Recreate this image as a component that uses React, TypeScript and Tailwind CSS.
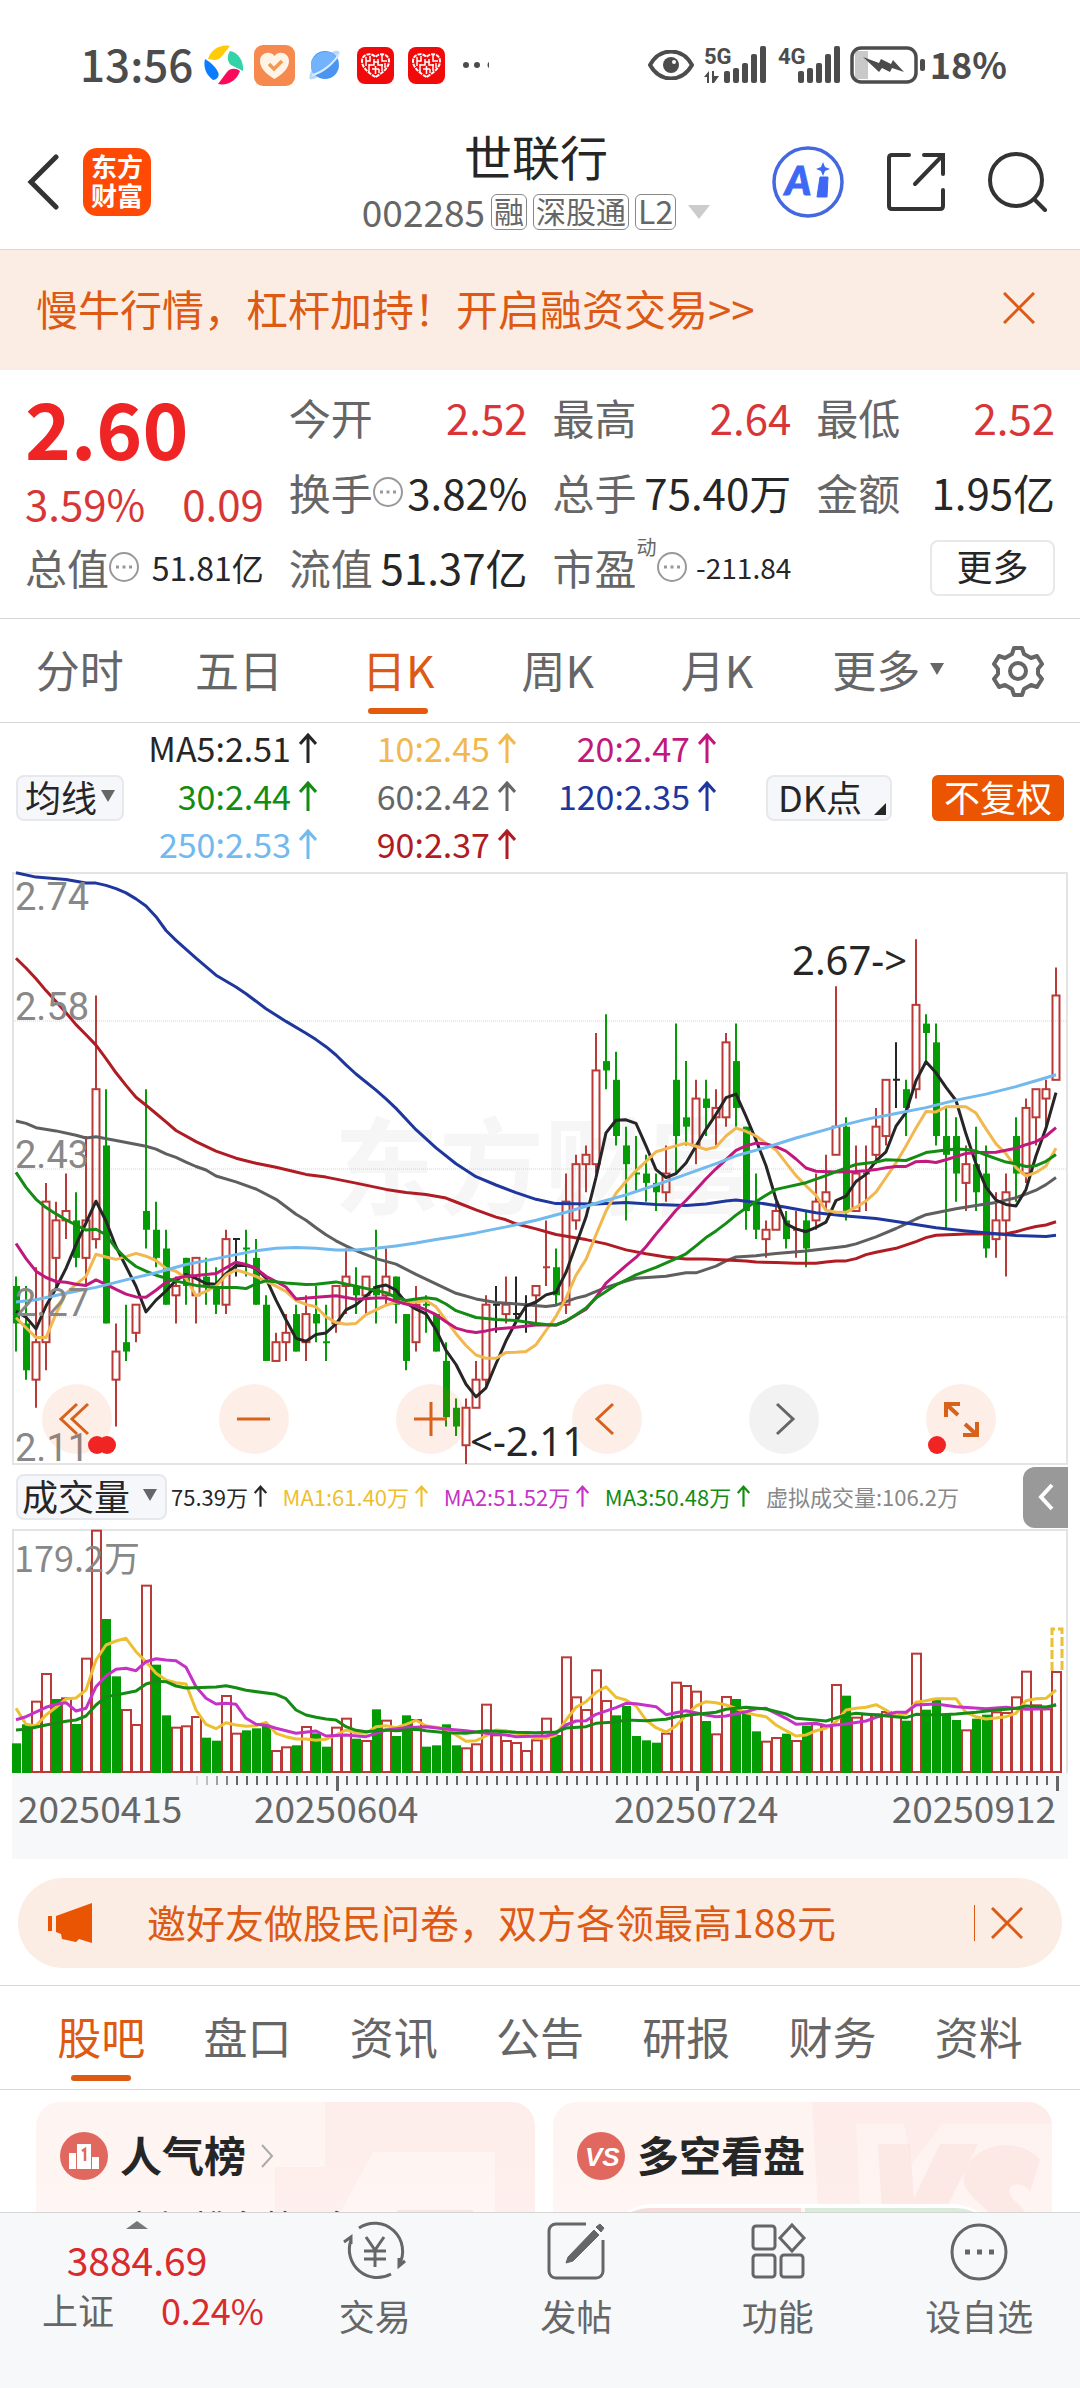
import { ReactNode } from 'react'

type Candle = [high: number, top: number, bottom: number, low: number, kind: 'u' | 'd' | 'f']

// prices are in cents above 2.11
const candles: Candle[] = [
  [20, 19, 15, 12, 'd'], [19, 15, 10, 9, 'd'], [21, 13, 9, 6, 'u'], [30, 28, 13, 10, 'u'], [28, 26, 22, 19, 'u'],
  [31, 27, 26, 24, 'u'], [29, 26, 22, 21, 'd'], [35, 26, 22, 19, 'u'], [50, 40, 24, 23, 'u'], [40, 34, 15, 15, 'd'],
  [15, 12, 9, 4, 'u'], [17, 13, 12, 11, 'd'], [17, 17, 14, 13, 'u'], [40, 27, 25, 23, 'd'], [28, 25, 22, 21, 'd'],
  [25, 23, 17, 17, 'd'], [20, 19, 18, 15, 'u'], [22, 22, 19, 17, 'd'], [22, 22, 18, 15, 'u'], [22, 20, 19, 17, 'd'],
  [21, 19, 17, 16, 'd'], [25, 24, 17, 16, 'u'], [24, 24, 24, 20, 'f'], [25, 23, 23, 20, 'd'], [24, 22, 17, 17, 'd'],
  [18, 17, 11, 11, 'd'], [14, 13, 11, 11, 'u'], [16, 14, 13, 11, 'u'], [17, 16, 12, 12, 'd'], [18, 16, 13, 11, 'u'],
  [19, 16, 15, 13, 'd'], [17, 13, 13, 11, 'd'], [19, 19, 15, 14, 'u'], [23, 20, 19, 16, 'u'], [21, 19, 18, 16, 'd'],
  [20, 20, 18, 16, 'u'], [25, 19, 18, 15, 'd'], [23, 20, 18, 17, 'u'], [20, 20, 17, 15, 'd'], [16, 16, 11, 10, 'd'],
  [19, 17, 13, 12, 'u'], [18, 17, 17, 14, 'd'], [16, 16, 12, 12, 'd'], [13, 11, 5, 4, 'd'], [7, 6, 4, 3, 'd'],
  [7, 6, 2, 0, 'u'], [11, 9, 6, 6, 'u'], [18, 17, 9, 8, 'u'], [19, 17, 17, 14, 'f'], [20, 17, 16, 15, 'u'],
  [20, 16, 16, 15, 'f'], [18, 17, 17, 14, 'f'], [19, 19, 18, 15, 'u'], [26, 21, 21, 19, 'u'], [23, 21, 18, 17, 'd'],
  [31, 28, 17, 16, 'u'], [33, 32, 26, 25, 'u'], [34, 33, 32, 29, 'u'], [46, 42, 32, 31, 'u'], [48, 43, 42, 40, 'd'],
  [44, 41, 35, 34, 'd'], [36, 34, 32, 26, 'd'], [35, 31, 31, 29, 'd'], [33, 31, 30, 28, 'd'], [31, 30, 29, 27, 'd'],
  [34, 31, 29, 28, 'u'], [47, 41, 35, 31, 'd'], [43, 37, 36, 34, 'd'], [41, 39, 34, 32, 'u'], [41, 39, 38, 35, 'd'],
  [40, 38, 37, 34, 'u'], [46, 45, 37, 36, 'u'], [47, 43, 38, 36, 'd'], [36, 36, 27, 25, 'd'], [31, 28, 25, 24, 'd'],
  [26, 25, 24, 22, 'u'], [28, 27, 25, 25, 'u'], [27, 26, 24, 23, 'd'], [27, 25, 25, 22, 'u'], [27, 26, 23, 21, 'd'],
  [31, 28, 26, 25, 'u'], [33, 29, 28, 27, 'u'], [51, 36, 33, 33, 'u'], [37, 36, 27, 26, 'd'], [34, 31, 27, 27, 'u'],
  [34, 31, 31, 27, 'u'], [38, 36, 33, 32, 'u'], [41, 41, 35, 34, 'u'], [45, 41, 41, 38, 'f'], [41, 40, 38, 35, 'd'],
  [56, 49, 40, 39, 'u'], [48, 47, 46, 43, 'd'], [47, 45, 35, 34, 'd'], [38, 35, 33, 25, 'd'], [37, 35, 31, 28, 'd'],
  [34, 32, 30, 27, 'u'], [36, 32, 29, 27, 'd'], [34, 31, 23, 22, 'd'], [29, 26, 24, 22, 'u'], [31, 29, 26, 20, 'u'],
  [37, 35, 31, 28, 'd'], [39, 38, 31, 30, 'u'], [40, 40, 37, 34, 'u'], [41, 40, 39, 36, 'u'], [53, 50, 41, 41, 'u'],
]

// flat lists of bar index, raw y
const averages = [
  {
    color: '#5f5f5f',
    points: [0, 662, 1, 668, 2, 679, 4, 687, 6, 698, 7, 705, 8, 702, 10, 711, 13, 726, 14, 733, 15, 745, 16, 754, 17, 766, 18, 777, 19, 786, 20, 801, 22, 816, 24, 834, 26, 860, 28, 898, 29, 913, 30, 932, 31, 950, 32, 965, 33, 978, 34, 990, 36, 1010, 38, 1024, 40, 1050, 42, 1074, 44, 1098, 46, 1112, 48, 1121, 51, 1127, 53, 1131, 54, 1128, 56, 1110, 57, 1104, 59, 1083, 61, 1067, 62, 1060, 65, 1055, 67, 1046, 68, 1046, 70, 1029, 71, 1016, 72, 1006, 74, 1003, 76, 997, 79, 991, 82, 982, 83, 979, 84, 973, 86, 955, 88, 934, 89, 922, 90, 910, 91, 899, 92, 894, 94, 884, 96, 876, 98, 868, 99, 862, 100, 856, 101, 847, 102, 837, 103, 823, 104, 805],
  },
  {
    color: '#b01c24',
    points: [0, 250, 1, 275, 2, 302, 3, 332, 4, 360, 5, 388, 6, 418, 7, 444, 8, 470, 9, 504, 10, 540, 11, 572, 12, 602, 13, 622, 14, 643, 15, 664, 16, 686, 18, 714, 20, 738, 22, 756, 24, 769, 26, 779, 28, 791, 29, 797, 31, 804, 34, 819, 37, 835, 39, 843, 41, 848, 43, 857, 44, 867, 46, 887, 48, 905, 49, 912, 50, 922, 52, 935, 54, 949, 57, 962, 59, 973, 61, 988, 63, 998, 65, 1006, 67, 1011, 69, 1011, 71, 1014, 73, 1016, 74, 1019, 76, 1020, 78, 1022, 80, 1022, 81, 1019, 82, 1016, 83, 1016, 84, 1010, 85, 1000, 86, 994, 88, 984, 90, 967, 91, 957, 92, 951, 95, 948, 99, 947, 100, 942, 101, 935, 102, 929, 103, 925, 104, 917],
  },
  {
    color: '#1f379d',
    points: [0, 34, 2, 45, 5, 51, 7, 60, 8, 60, 9, 66, 10, 74, 11, 85, 12, 100, 13, 118, 14, 145, 15, 180, 16, 205, 18, 250, 20, 293, 22, 323, 23, 340, 25, 378, 27, 410, 29, 440, 30, 456, 31, 474, 32, 495, 33, 520, 34, 543, 36, 584, 37, 606, 38, 630, 40, 684, 42, 730, 44, 770, 46, 803, 48, 824, 50, 843, 52, 860, 54, 871, 58, 872, 61, 868, 64, 873, 67, 876, 69, 872, 71, 864, 72, 862, 74, 868, 77, 880, 80, 894, 83, 902, 86, 909, 89, 920, 92, 932, 95, 940, 98, 947, 100, 952, 103, 954, 104, 951],
  },
  {
    color: '#262626',
    points: [0, 1143, 1, 1158, 2, 1188, 3, 1130, 4, 1085, 5, 1035, 6, 975, 7, 920, 8, 865, 9, 915, 10, 980, 11, 1030, 12, 1080, 13, 1145, 14, 1115, 15, 1092, 16, 1065, 17, 1050, 18, 1060, 19, 1073, 20, 1075, 21, 1048, 22, 1028, 23, 1027, 24, 1035, 25, 1060, 26, 1115, 27, 1165, 28, 1212, 29, 1219, 30, 1202, 31, 1198, 32, 1175, 33, 1140, 34, 1127, 35, 1105, 36, 1082, 37, 1077, 38, 1090, 39, 1122, 40, 1138, 41, 1150, 42, 1190, 43, 1242, 44, 1278, 45, 1328, 46, 1360, 47, 1337, 48, 1276, 49, 1218, 50, 1170, 51, 1130, 52, 1120, 53, 1102, 54, 1095, 55, 1045, 56, 975, 57, 905, 58, 805, 59, 692, 60, 660, 61, 659, 62, 668, 63, 725, 64, 785, 65, 805, 66, 795, 67, 768, 68, 725, 69, 683, 70, 645, 71, 603, 72, 594, 73, 650, 74, 710, 75, 775, 76, 860, 77, 922, 78, 935, 79, 942, 80, 931, 81, 918, 82, 863, 83, 852, 84, 815, 85, 797, 86, 763, 87, 740, 88, 675, 89, 640, 90, 560, 91, 512, 92, 540, 93, 577, 94, 610, 95, 695, 96, 770, 97, 830, 98, 862, 99, 873, 100, 877, 101, 835, 102, 750, 103, 680, 104, 590],
  },
  {
    color: '#f1b84f',
    points: [0, 1160, 1, 1185, 2, 1210, 3, 1210, 4, 1150, 5, 1098, 6, 1075, 7, 1055, 8, 999, 9, 1006, 10, 1012, 11, 1005, 12, 997, 13, 1004, 14, 1015, 15, 1035, 16, 1042, 17, 1060, 18, 1104, 19, 1093, 20, 1080, 21, 1052, 22, 1039, 23, 1046, 24, 1055, 25, 1067, 26, 1080, 27, 1093, 28, 1116, 29, 1126, 30, 1132, 31, 1157, 32, 1172, 33, 1176, 34, 1174, 35, 1152, 36, 1140, 37, 1128, 38, 1120, 40, 1120, 41, 1116, 42, 1132, 43, 1166, 44, 1200, 45, 1230, 46, 1254, 47, 1262, 48, 1262, 49, 1248, 50, 1247, 51, 1245, 52, 1228, 53, 1192, 54, 1156, 55, 1110, 56, 1052, 57, 1012, 58, 950, 59, 890, 60, 845, 61, 815, 62, 788, 63, 764, 64, 740, 65, 732, 66, 725, 67, 718, 68, 726, 69, 734, 70, 728, 71, 700, 72, 680, 73, 688, 74, 700, 75, 718, 76, 735, 77, 768, 78, 800, 79, 826, 80, 850, 81, 888, 82, 893, 83, 893, 84, 880, 85, 864, 86, 842, 87, 805, 88, 768, 89, 725, 90, 680, 91, 638, 92, 639, 93, 626, 94, 625, 95, 626, 96, 642, 97, 682, 98, 720, 99, 745, 100, 780, 101, 801, 102, 792, 103, 776, 104, 731],
  },
  {
    color: '#c0187c',
    points: [0, 972, 1, 1010, 2, 1042, 3, 1058, 4, 1068, 5, 1070, 6, 1075, 7, 1078, 8, 1064, 9, 1075, 10, 1088, 11, 1100, 12, 1107, 13, 1108, 14, 1090, 15, 1070, 16, 1060, 17, 1055, 18, 1053, 20, 1048, 21, 1033, 22, 1019, 23, 1025, 24, 1035, 25, 1055, 26, 1068, 27, 1082, 28, 1112, 30, 1108, 32, 1104, 34, 1113, 36, 1110, 37, 1110, 38, 1118, 39, 1125, 40, 1130, 41, 1140, 42, 1152, 43, 1170, 44, 1186, 45, 1193, 46, 1197, 47, 1193, 48, 1188, 50, 1184, 52, 1178, 54, 1178, 55, 1168, 57, 1138, 58, 1108, 59, 1072, 60, 1050, 61, 1028, 62, 1007, 63, 980, 64, 948, 65, 918, 66, 888, 67, 863, 68, 836, 69, 808, 70, 783, 71, 760, 72, 736, 73, 725, 74, 718, 75, 720, 76, 727, 77, 738, 78, 758, 79, 781, 80, 789, 82, 791, 84, 790, 85, 788, 86, 785, 87, 780, 88, 777, 89, 777, 90, 765, 91, 764, 92, 767, 93, 760, 94, 752, 95, 744, 96, 742, 98, 741, 99, 736, 100, 731, 101, 722, 102, 714, 103, 700, 104, 679],
  },
  {
    color: '#148c14',
    points: [0, 792, 1, 830, 2, 860, 3, 881, 4, 897, 5, 912, 6, 925, 7, 938, 8, 936, 9, 950, 10, 984, 11, 1010, 12, 1030, 13, 1042, 14, 1052, 16, 1067, 18, 1078, 20, 1083, 22, 1083, 23, 1086, 24, 1074, 25, 1066, 27, 1072, 29, 1076, 30, 1075, 32, 1069, 34, 1080, 36, 1091, 37, 1096, 38, 1108, 39, 1116, 40, 1112, 41, 1109, 42, 1112, 43, 1125, 44, 1142, 46, 1159, 48, 1164, 50, 1167, 52, 1174, 53, 1177, 54, 1178, 55, 1168, 56, 1152, 57, 1135, 58, 1110, 60, 1077, 62, 1051, 64, 1032, 66, 1010, 67, 998, 68, 978, 69, 957, 70, 940, 71, 921, 72, 900, 73, 882, 74, 866, 75, 850, 76, 835, 79, 818, 81, 800, 82, 790, 84, 772, 86, 766, 87, 760, 89, 762, 90, 752, 91, 742, 93, 735, 94, 733, 95, 734, 96, 738, 97, 748, 98, 757, 99, 766, 100, 770, 101, 777, 102, 775, 103, 764, 104, 747],
  },
  {
    color: '#72b9ee',
    points: [0, 1120, 2, 1114, 5, 1098, 8, 1083, 11, 1064, 14, 1046, 17, 1025, 20, 1010, 22, 1000, 24, 990, 26, 984, 28, 982, 30, 984, 32, 988, 34, 988, 36, 984, 38, 978, 40, 971, 42, 962, 44, 954, 46, 945, 49, 930, 52, 913, 55, 893, 58, 870, 61, 849, 64, 824, 67, 797, 70, 770, 72, 750, 75, 729, 78, 705, 82, 677, 85, 658, 88, 643, 91, 628, 94, 609, 97, 594, 100, 575, 102, 560, 104, 545],
  },
]

// raw bar tops, negative means a falling day
const volumes = [
  -850, -793, 722, 639, -717, 712, -792, 593, 209, -477, -649, 747, 792, 374, -614, -766, 800, 796, 768, -833, -842,
  705, 818, -811, -805, -797, 870, 859, -856, 798, -820, -860, 800, 773, -836, 840, -748, 779, -828, -766, 777, -860,
  -856, -793, -856, 862, 850, 731, 823, 840, 846, 870, 838, 773, -825, 589, 709, 747, 628, 720, -766, -738, -828, -841,
  -848, 818, 665, 675, 692, -783, 820, 708, -717, -758, -814, 842, 831, -821, 840, -797, 790, 797, 672, -707, 770, 760,
  760, 753, 765, -782, 578, -749, -720, -763, -780, 808, -776, -764, 754, 756, 709, 632, 733, 745, 633,
]

const volumeAverages = [
  {
    color: '#ecc030',
    points: [0, 745, 1, 793, 2, 797, 3, 765, 4, 742, 5, 717, 6, 714, 7, 690, 8, 600, 9, 555, 10, 543, 11, 535, 12, 575, 13, 605, 14, 640, 15, 660, 16, 668, 17, 672, 18, 750, 19, 793, 20, 806, 21, 788, 22, 795, 23, 799, 24, 797, 25, 787, 26, 820, 27, 830, 28, 837, 29, 837, 30, 841, 31, 838, 32, 825, 33, 810, 34, 818, 35, 820, 36, 800, 37, 797, 38, 803, 39, 793, 40, 781, 41, 797, 42, 802, 43, 808, 44, 825, 45, 844, 46, 842, 47, 828, 48, 810, 49, 812, 50, 820, 51, 825, 52, 835, 53, 835, 54, 825, 55, 780, 56, 742, 57, 725, 58, 697, 59, 680, 60, 712, 61, 720, 62, 738, 63, 780, 64, 803, 65, 816, 66, 798, 67, 765, 68, 738, 69, 725, 70, 728, 71, 735, 72, 745, 73, 758, 74, 765, 75, 770, 76, 795, 77, 812, 78, 828, 79, 825, 80, 812, 81, 805, 82, 785, 83, 750, 84, 745, 85, 742, 86, 734, 87, 750, 88, 768, 89, 762, 90, 727, 91, 722, 92, 716, 94, 716, 95, 758, 96, 770, 97, 777, 98, 774, 99, 770, 100, 760, 101, 722, 102, 716, 103, 715, 104, 690],
  },
  {
    color: '#c632c6',
    points: [0, 779, 1, 770, 3, 742, 4, 733, 5, 728, 6, 753, 7, 745, 8, 680, 9, 648, 10, 628, 11, 625, 12, 632, 13, 605, 14, 596, 15, 600, 16, 602, 17, 622, 18, 680, 19, 715, 20, 732, 21, 730, 22, 733, 23, 775, 24, 793, 25, 796, 26, 805, 28, 820, 30, 813, 31, 828, 33, 825, 35, 830, 37, 810, 39, 803, 41, 800, 43, 807, 45, 812, 47, 820, 49, 825, 50, 830, 52, 828, 53, 828, 54, 820, 55, 795, 56, 783, 57, 782, 58, 763, 60, 743, 61, 730, 62, 731, 64, 740, 65, 764, 67, 752, 69, 765, 70, 770, 71, 768, 73, 755, 74, 746, 75, 745, 77, 775, 78, 793, 80, 790, 81, 798, 83, 792, 85, 783, 86, 772, 88, 757, 89, 757, 90, 735, 92, 732, 94, 740, 97, 746, 99, 742, 101, 748, 103, 746, 104, 733],
  },
  {
    color: '#148c14',
    points: [0, 810, 1, 808, 3, 795, 5, 784, 6, 780, 7, 768, 8, 735, 9, 710, 10, 705, 12, 693, 13, 672, 14, 664, 15, 665, 16, 678, 17, 684, 20, 681, 21, 677, 22, 683, 23, 691, 26, 703, 27, 716, 28, 750, 29, 765, 30, 772, 31, 777, 32, 780, 33, 800, 34, 811, 35, 815, 37, 810, 38, 812, 40, 808, 41, 812, 43, 818, 45, 820, 47, 812, 50, 817, 52, 818, 54, 816, 55, 804, 57, 800, 58, 790, 60, 786, 61, 780, 63, 782, 65, 778, 66, 770, 68, 763, 70, 757, 71, 748, 73, 742, 75, 747, 77, 762, 78, 775, 80, 780, 81, 783, 83, 765, 84, 760, 86, 765, 89, 773, 90, 763, 92, 765, 94, 762, 96, 757, 98, 750, 99, 748, 100, 745, 101, 738, 103, 741, 104, 735],
  },
]

const barX = (i: number) => 4 + i * 10
const priceY = (cents: number) => 592 - cents * 9.37
const averageY = (raw: number) => (raw - 32) / 2.53
const volumeY = (raw: number) => (raw - 207) / 3

function toPoints(flat: number[], toY: (raw: number) => number) {
  const out: string[] = []
  for (let i = 0; i < flat.length; i += 2) out.push(`${barX(flat[i])},${toY(flat[i + 1]).toFixed(1)}`)
  return out.join(' ')
}

const RED = '#b93a36'
const GREEN = '#049c04'

function CandleBar({ candle, x }: { candle: Candle; x: number }) {
  const [high, top, bottom, low, kind] = candle
  const color = kind === 'u' ? RED : kind === 'd' ? GREEN : '#262626'
  const flat = top === bottom
  return (
    <g stroke={color} strokeWidth="2">
      {flat && <path d={`M${x} ${priceY(high)}V${priceY(low)}M${x - 3} ${priceY(top)}h7`} />}
      {!flat && kind === 'u' && (
        <>
          <path d={`M${x} ${priceY(high)}V${priceY(top)}M${x} ${priceY(bottom)}V${priceY(low)}`} />
          <rect x={x - 3.5} y={priceY(top)} width="7" height={priceY(bottom) - priceY(top)} fill="none" />
        </>
      )}
      {!flat && kind === 'd' && (
        <>
          <path d={`M${x} ${priceY(high)}V${priceY(low)}`} />
          <rect x={x - 3} y={priceY(top)} width="7" height={priceY(bottom) - priceY(top)} fill={color} stroke="none" />
        </>
      )}
    </g>
  )
}

const priceLabels = [
  { text: '2.74', y: 38 },
  { text: '2.58', y: 148 },
  { text: '2.43', y: 296 },
  { text: '2.27', y: 444 },
  { text: '2.11', y: 589 },
]

function PriceChart() {
  return (
    <svg viewBox="0 0 1056 593" className="block h-auto w-full overflow-visible" role="img" aria-label="日K线图">
      <text x="322" y="334" fontSize="105" fontWeight="700" fill="#f6f6f6">
        东方财富
      </text>
      <rect x="1" y="1" width="1054" height="591" fill="none" stroke="#e4e4e4" strokeWidth="2" />
      {[149, 297, 445].map((y) => (
        <path key={y} d={`M1 ${y}H1055`} stroke="#d4d4d4" strokeDasharray="1 1" />
      ))}
      {candles.map((c, i) => (
        <CandleBar key={i} candle={c} x={barX(i)} />
      ))}
      {averages.map((line) => (
        <polyline
          key={line.color}
          points={toPoints(line.points, averageY)}
          fill="none"
          stroke={line.color}
          strokeWidth="3"
          strokeLinejoin="round"
        />
      ))}
      <g fill="#888" fontSize="38" className="font-[Roboto,sans-serif]">
        {priceLabels.map((l) => (
          <text key={l.text} x="3" y={l.y}>
            {l.text}
          </text>
        ))}
      </g>
      <g fill="#262626" fontSize="40" className="font-['Noto_Sans',sans-serif]">
        <text x="780" y="103">{'2.67->'}</text>
        <text x="458" y="584">{'<-2.11'}</text>
      </g>
    </svg>
  )
}

function VolumeChart() {
  return (
    <svg viewBox="0 0 1056 244" className="block h-auto w-full" role="img" aria-label="成交量图">
      <path d="M0 1H1055V244M1 0V244" fill="none" stroke="#e4e4e4" strokeWidth="2" />
      {volumes.map((v, i) => {
        const y = volumeY(Math.abs(v))
        return v < 0 ? (
          <rect key={i} x={barX(i) - 4} y={y} width="9" height={244 - y} fill={GREEN} />
        ) : (
          <rect key={i} x={barX(i) - 4} y={y + 1} width="9" height={242 - y} fill="#fff" stroke={RED} strokeWidth="2" />
        )
      })}
      <path d="M1040 142V100h10v42" fill="none" stroke="#ecc030" strokeWidth="3" strokeDasharray="9 3" />
      <text x="2" y="43" fontSize="36" fill="#888">
        179.2万
      </text>
      {volumeAverages.map((line) => (
        <polyline
          key={line.color}
          points={toPoints(line.points, volumeY)}
          fill="none"
          stroke={line.color}
          strokeWidth="3"
          strokeLinejoin="round"
        />
      ))}
    </svg>
  )
}

function DateAxis() {
  return (
    <svg viewBox="0 0 1056 86" className="block h-auto w-full bg-[#f7f8fa]" fill="#666" fontSize="37">
      {Array.from({ length: 87 }, (_, k) => k + 18).map((i) => {
        const major = i === 32 || i === 68 || i === 104
        return (
          <rect
            key={i}
            x={barX(i)}
            y="3"
            width={major ? 3 : 2}
            height={major ? 15 : 9}
            opacity={Math.min(1, (i - 17) / 5)}
          />
        )
      })}
      <text x="6" y="50">20250415</text>
      <text x="242" y="50">20250604</text>
      <text x="602" y="50">20250724</text>
      <text x="1044" y="50" textAnchor="end">20250912</text>
    </svg>
  )
}

function UpArrow({ className }: { className: string }) {
  return (
    <svg viewBox="0 0 18 30" className={className} fill="none" stroke="currentColor" strokeWidth="3">
      <path d="M9 30V2M1 11l8-9 8 9" />
    </svg>
  )
}

function Caret({ className }: { className: string }) {
  return (
    <svg viewBox="0 0 14 12" preserveAspectRatio="none" className={className} fill="currentColor">
      <path d="M0 0h14l-7 12z" />
    </svg>
  )
}

function Cross({ className }: { className: string }) {
  return (
    <svg viewBox="0 0 32 32" className={className} fill="none" stroke="#dc5a14" strokeWidth="3">
      <path d="M1 1l30 30M31 1L1 31" />
    </svg>
  )
}

function Info() {
  return (
    <svg viewBox="0 0 30 30" className="size-[30px] shrink-0" fill="none" stroke="#999" strokeWidth="2">
      <circle cx="15" cy="15" r="14" />
      <path d="M7 15h3M13.5 15h3M20 15h3" strokeWidth="3" />
    </svg>
  )
}

function Signal({ label, bars, arrows }: { label: string; bars: number[]; arrows?: boolean }) {
  return (
    <svg viewBox="0 0 62 40" className="h-10 w-[62px]" fill="#4c4c4c">
      <text x="0" y="19" fontSize="22" fontWeight="700" className="font-[Roboto,sans-serif]">
        {label}
      </text>
      {arrows && <path d="M0 32l5-6v12H3v-6zM8 26h2v5h5l-5 7H8z" />}
      {bars.map((h, i) => (
        <rect key={i} x={56 - (bars.length - 1 - i) * 9} y={38 - h} width="6" height={h} rx="2" />
      ))}
    </svg>
  )
}

function HeartApp() {
  return (
    <svg viewBox="0 0 37 37" className="size-[37px]">
      <rect width="37" height="37" rx="8" fill="#f20a0a" />
      <path
        d="M18.5 30C10 25 5 20 5 14c0-7 9-9 13.500-4C23 5 32 7 32 14c0 6-5 11-13.500 16z"
        fill="none"
        stroke="#fff"
        strokeWidth="2"
        strokeDasharray="4 1"
      />
      <path
        d="M9 10v9M13 9v5h-4M12 17v8M17 12v6h-5M15 22h7M18.500 19v8M21 12v6h5M17 15h5M25 8v6h5M25 17v7M28 16v5M22 22v4"
        stroke="#fff"
        strokeWidth="1.500"
        fill="none"
      />
    </svg>
  )
}

function StatusBar() {
  return (
    <div className="flex h-[130px] items-center pr-[73px] pl-20 text-[#4c4c4c]">
      <span className="w-[124px] pb-1 text-[44px] font-medium">13:56</span>
      <svg viewBox="0 0 40 40" className="size-10">
        <path d="M4 14C7 4 17-1 26 1l-8 10c-2 3-5 4-8 4z" fill="#fecb0b" />
        <path d="M26 6c8 1 14 10 13 20l-12-6c-4-3-4-10-1-14z" fill="#31d4a6" />
        <path d="M36 26c-3 9-12 15-22 13l9-12c3-4 9-4 13-1z" fill="#fb0a5c" />
        <path d="M1 14c5 3 11 8 13 13 2 4-1 8-5 8C2 30-1 22 1 14z" fill="#0a7cff" />
      </svg>
      <svg viewBox="0 0 41 41" className="ml-2.5 size-[41px]">
        <rect width="41" height="41" rx="9" fill="#f68a4e" />
        <path d="M20.500 34C12 29 6 23 6 16c0-8 10-11 14.500-5C25 5 35 8 35 16c0 7-6 13-14.500 18z" fill="#fff4e6" />
        <path d="M15 19l5 5 8-8" fill="none" stroke="#f19a54" strokeWidth="3.500" />
      </svg>
      <svg viewBox="0 0 32 32" className="ml-[14px] size-8">
        <path d="M23 3c8-3 9 0 6 6S16 25 7 29s-7-1-5-7z" fill="#b9d7fb" />
        <circle cx="16" cy="16" r="14" fill="#4c94f2" />
        <path d="M3 11C9 1 22 0 27 8c-8 9-14 15-22 18C2 22 1 16 3 11z" fill="#72b3fb" />
        <path d="M30 5c-5 9-17 19-27 21" fill="none" stroke="#dcecff" strokeWidth="2" />
      </svg>
      <span className="ml-4 flex gap-[14px]">
        <HeartApp />
        <HeartApp />
      </span>
      <svg viewBox="0 0 26 6" className="ml-[18px] h-1.5 w-[26px]" fill="#4c4c4c">
        <circle cx="3" cy="3" r="3" />
        <circle cx="14" cy="3" r="3" />
        <path d="M26 0v6c-2-1-2-5 0-6z" />
      </svg>
      <svg viewBox="0 0 46 30" className="ml-auto h-[30px] w-[46px]">
        <path d="M2 15C12-3 34-3 44 15 34 33 12 33 2 15z" fill="none" stroke="#4c4c4c" strokeWidth="4" />
        <circle cx="23" cy="15" r="8" fill="#4c4c4c" />
        <circle cx="26" cy="12" r="2" fill="#fff" />
      </svg>
      <span className="ml-2.5 flex gap-3">
        <Signal label="5G" bars={[12, 15, 20, 29, 37]} arrows />
        <Signal label="4G" bars={[12, 15, 20, 29, 37]} />
      </span>
      <svg viewBox="0 0 76 38" className="ml-2.5 h-[38px] w-[76px]">
        <path d="M5 5h13v28H5z" fill="#c9c9c9" />
        <rect x="2" y="2" width="64" height="34" rx="9" fill="none" stroke="#4c4c4c" strokeWidth="3.500" />
        <path d="M13 11l16 6 2-4 10 5 2-4 11 12-12-4-2 4-8-4-3 4z" fill="#4c4c4c" />
        <rect x="70" y="13" width="5" height="12" rx="2" fill="#4c4c4c" />
      </svg>
      <span className="ml-1 pb-1 text-[36px] font-bold">18%</span>
    </div>
  )
}

function Header() {
  return (
    <header className="flex h-[120px] items-center justify-between border-b border-[#d8d8d8] pb-4">
      <div className="flex w-[300px] items-center pl-[27px]">
        <button type="button" aria-label="返回">
          <svg viewBox="0 0 32 56" className="h-14 w-8" fill="none" stroke="#333" strokeWidth="5" strokeLinecap="round">
            <path d="M29 3L4 28l25 25" />
          </svg>
        </button>
        <a
          href="#home"
          className="ml-6 flex size-[68px] flex-col items-center justify-center rounded-[14px] bg-[#ff4a06] pb-1 text-[26px] leading-[29px] font-bold text-white"
        >
          <span>东方</span>
          <span>财富</span>
        </a>
      </div>
      <div className="flex flex-1 flex-col items-center pt-1 whitespace-nowrap">
        <h1 className="text-[48px] leading-[56px] text-[#262626]">世联行</h1>
        <div className="flex h-[58px] items-center gap-1.5 text-[32px] text-[#666]">
          <span className="text-[37px]">002285</span>
          <span className="flex h-9 items-center rounded-md border border-[#888] px-0.5 pb-1 text-[30px]">融</span>
          <span className="flex h-9 items-center rounded-md border border-[#888] px-0.5 pb-1 text-[30px]">深股通</span>
          <span className="flex h-9 items-center rounded-md border border-[#888] px-0.5 pb-1 text-[32px]">L2</span>
          <Caret className="ml-1.5 h-[14px] w-[22px] text-[#ccc]" />
        </div>
      </div>
      <div className="flex w-[308px] items-center justify-between pr-[32px]">
        <button type="button" aria-label="Ai">
          <svg viewBox="0 0 72 72" className="size-[72px]" fill="#3d68f5">
            <circle cx="36" cy="36" r="34" fill="none" stroke="#4468e0" strokeWidth="3.500" />
            <text
              x="13"
              y="49"
              fontSize="40"
              fontWeight="900"
              fontStyle="italic"
              stroke="#3d68f5"
              className="font-[Lato,sans-serif]"
            >
              A
            </text>
            <path d="M48 31h8l-1 20h-10z" strokeLinejoin="round" stroke="#3d68f5" />
            <path d="M51 16l2 5 5 2-5 2-2 5-2-5-5-2 5-2z" />
          </svg>
        </button>
        <button type="button" aria-label="分享">
          <svg viewBox="0 0 60 60" className="size-[60px]" fill="none" stroke="#333" strokeWidth="4" strokeLinecap="round">
            <path d="M23 3H6c-2 0-3 1-3 3v48c0 2 1 3 3 3h48c2 0 3-1 3-3V38M38 3h19v19M56 4L29 32" />
          </svg>
        </button>
        <button type="button" aria-label="搜索">
          <svg viewBox="0 0 60 60" className="size-[60px]" fill="none" stroke="#333" strokeWidth="4" strokeLinecap="round">
            <circle cx="28" cy="28" r="26" />
            <path d="M46 47l11 11" />
          </svg>
        </button>
      </div>
    </header>
  )
}

function Quote({ label, value, tone, small, info, sup }: {
  label: string
  value: string
  tone?: string
  small?: string
  info?: boolean
  sup?: string
}) {
  return (
    <div className="flex h-[75px] items-center pb-1.5 text-[42px] whitespace-nowrap text-[#666]">
      <dt className="flex items-center">
        {label}
        {sup && <sup className="-top-5 text-[20px]">{sup}</sup>}
        {info && <Info />}
      </dt>
      <dd className={`ml-auto ${small ?? 'text-[42px]'} ${tone ?? 'text-[#262626]'}`}>{value}</dd>
    </div>
  )
}

function QuotePanel() {
  return (
    <dl className="grid grid-cols-4 gap-x-[25px] border-b border-[#d8d8d8] px-[25px] pt-3 pb-[11px]">
      <div className="row-span-2 text-[#d83636]">
        <dt className="flex h-24 items-center pb-2 text-[78px] font-bold text-[#ee2524]">2.60</dt>
        <dd className="flex h-[54px] items-center justify-between pb-1 text-[42px]">
          <span>3.59%</span>
          <span>0.09</span>
        </dd>
      </div>
      <Quote label="今开" value="2.52" tone="text-[#d83636]" />
      <Quote label="最高" value="2.64" tone="text-[#d83636]" />
      <Quote label="最低" value="2.52" tone="text-[#d83636]" />
      <Quote label="换手" value="3.82%" info />
      <Quote label="总手" value="75.40万" />
      <Quote label="金额" value="1.95亿" />
      <Quote label="总值" value="51.81亿" small="text-[32px]" info />
      <Quote label="流值" value="51.37亿" />
      <Quote label="市盈" value="-211.84" small="text-[28px]" sup="动" info />
      <div className="flex h-[75px] items-center justify-end pb-1">
        <button
          type="button"
          className="h-14 w-[125px] rounded-lg border-2 border-[#e8e8e8] pb-1.5 text-[36px] leading-none text-[#262626]"
        >
          更多
        </button>
      </div>
    </dl>
  )
}

const periods = ['分时', '五日', '日K', '周K', '月K', '更多']

function PeriodTabs() {
  return (
    <nav className="flex h-[104px] items-center border-b border-[#d8d8d8] text-[44px] text-[#666]">
      {periods.map((p) => (
        <button
          key={p}
          type="button"
          className={`relative flex h-full flex-1 items-center justify-center pb-1 ${p === '日K' ? 'text-[#dc5a14]' : ''}`}
        >
          {p}
          {p === '日K' && <span className="absolute bottom-2 h-1.5 w-[60px] rounded-full bg-[#e45a0c]" />}
          {p === '更多' && <Caret className="absolute right-3 h-3 w-[14px]" />}
        </button>
      ))}
      <button type="button" aria-label="设置" className="flex w-[124px] justify-center">
        <svg viewBox="0 0 52 52" className="size-[52px]" fill="none" stroke="#666" strokeWidth="4" strokeLinejoin="round">
          <path d="M22 3h8l2 6 7 4 6-2 5 8-4 5v5l4 5-5 8-6-2-7 4-2 6h-8l-2-6-7-4-6 2-5-8 4-5v-5l-4-5 5-8 6 2 7-4z" />
          <circle cx="26" cy="26" r="8" />
        </svg>
      </button>
    </nav>
  )
}

const legend = [
  { text: 'MA5:2.51', color: 'text-[#262626]' },
  { text: '10:2.45', color: 'text-[#f1b84f]' },
  { text: '20:2.47', color: 'text-[#c0187c]' },
  { text: '30:2.44', color: 'text-[#148c14]' },
  { text: '60:2.42', color: 'text-[#666]' },
  { text: '120:2.35', color: 'text-[#1f379d]' },
  { text: '250:2.53', color: 'text-[#72b9ee]' },
  { text: '90:2.37', color: 'text-[#b01c24]' },
]

function MaLegend() {
  return (
    <div className="flex h-[149px] items-center px-4 text-[36px] whitespace-nowrap text-[#262626]">
      <button
        type="button"
        className="flex h-[46px] w-[108px] items-center justify-center gap-1 rounded-lg border-2 border-[#e6e8ec] bg-[#f6f7fa] pb-1"
      >
        均线
        <Caret className="h-3 w-[14px] text-[#666]" />
      </button>
      <ul className="grid grid-cols-[193px_199px_200px] pb-1 text-[34px] leading-[48px]">
        {legend.map((l) => (
          <li key={l.text} className={`flex items-center justify-end gap-2 ${l.color}`}>
            {l.text}
            <UpArrow className="h-[30px] w-[18px]" />
          </li>
        ))}
      </ul>
      <button
        type="button"
        className="relative ml-auto flex h-[46px] w-[126px] items-center rounded-lg border-2 border-[#e6e8ec] bg-[#f6f7fa] pb-1 pl-2.5"
      >
        DK点
        <svg viewBox="0 0 12 12" className="absolute right-1 bottom-1 size-3" fill="#262626">
          <path d="M12 0v12H0z" />
        </svg>
      </button>
      <button
        type="button"
        className="ml-10 flex h-[46px] w-[132px] items-center justify-center rounded-md bg-[#eb5502] pb-1 text-white"
      >
        不复权
      </button>
    </div>
  )
}

const controls: { label: string; icon: ReactNode; muted?: boolean }[] = [
  { label: '最左', icon: <path d="M35 20L19 35l16 15M46 20L30 35l16 15" /> },
  { label: '缩小', icon: <path d="M18 35h33" /> },
  { label: '放大', icon: <path d="M18 35h33M35 18v34" /> },
  { label: '左移', icon: <path d="M41 20L25 35l16 15" /> },
  { label: '右移', icon: <path d="M28 20l16 15-16 15" />, muted: true },
  { label: '全屏', icon: <path d="M20 33V20h14M20 20l12 11M37 51h14V38M51 51L39 40" strokeWidth="4" /> },
]

function PriceSection() {
  return (
    <section className="relative mx-3">
      <PriceChart />
      <div className="absolute right-[72px] bottom-[11px] left-[30px] flex justify-between">
        {controls.map((c) => (
          <button
            key={c.label}
            type="button"
            aria-label={c.label}
            className={`size-[70px] rounded-full ${c.muted ? 'bg-black/5' : 'bg-[#f06414]/10'}`}
          >
            <svg viewBox="0 0 70 70" fill="none" stroke={c.muted ? '#666' : '#d8611c'} strokeWidth="3">
              {c.icon}
            </svg>
          </button>
        ))}
      </div>
      <span className="absolute bottom-[11px] left-[76px] size-[18px] rounded-full bg-[#f02423]" />
      <span className="absolute bottom-[11px] left-[86px] size-[18px] rounded-full bg-[#f02423]" />
      <span className="absolute right-[122px] bottom-[11px] size-[18px] rounded-full bg-[#f02423]" />
    </section>
  )
}

function VolumeHeader() {
  return (
    <div className="mx-3 flex h-16 items-center pl-1 whitespace-nowrap">
      <button
        type="button"
        className="flex h-[46px] w-[151px] items-center justify-between rounded-lg border-2 border-[#e6e8ec] bg-[#f6f7fa] pr-2 pb-1 pl-1 text-[36px] text-[#262626]"
      >
        成交量
        <Caret className="h-3 w-[14px] text-[#666]" />
      </button>
      <div className="ml-1 flex w-[788px] items-center justify-between pb-0.5 text-[22px]">
        <span className="flex items-center gap-1.5 text-[#262626]">
          75.39万
          <UpArrow className="h-8 w-[13px]" />
        </span>
        <span className="flex items-center gap-1.5 text-[#ecc030]">
          MA1:61.40万
          <UpArrow className="h-8 w-[13px]" />
        </span>
        <span className="flex items-center gap-1.5 text-[#c632c6]">
          MA2:51.52万
          <UpArrow className="h-8 w-[13px]" />
        </span>
        <span className="flex items-center gap-1.5 text-[#148c14]">
          MA3:50.48万
          <UpArrow className="h-8 w-[13px]" />
        </span>
        <span className="text-[#888]">虚拟成交量:106.2万</span>
      </div>
      <button
        type="button"
        aria-label="展开"
        className="ml-auto flex h-[61px] w-[45px] items-center justify-center rounded-l-xl bg-[#999]"
      >
        <svg viewBox="0 0 16 28" className="h-7 w-4" fill="none" stroke="#fff" strokeWidth="4">
          <path d="M14 2L3 14l11 12" />
        </svg>
      </button>
    </div>
  )
}

function Promo() {
  return (
    <div className="mx-[18px] mt-[19px] mb-[17px] flex h-[90px] items-center rounded-full bg-[#fcede4] pr-[39px] pl-[30px] text-[#dc5a14]">
      <svg viewBox="0 0 46 40" className="h-10 w-[46px]" fill="#ea5504">
        <path d="M0 13h4v15H0zM8 13L44 0v40l-13-4-3 3-14-3-1-5-5-2z" />
      </svg>
      <a href="#survey" className="ml-[53px] pb-1 text-[39px] whitespace-nowrap">
        邀好友做股民问卷，双方各领最高188元
      </a>
      <span className="ml-auto h-9 w-px bg-[#dc5a14]" />
      <button type="button" aria-label="关闭" className="ml-4">
        <Cross className="size-8" />
      </button>
    </div>
  )
}

const sections = ['股吧', '盘口', '资讯', '公告', '研报', '财务', '资料']

function SectionTabs() {
  return (
    <nav className="flex h-[105px] border-y border-[#d8d8d8] px-7 text-[44px] text-[#666]">
      {sections.map((s, i) => (
        <a
          key={s}
          href={`#${s}`}
          className={`relative flex flex-1 items-center justify-center pb-1 ${i === 0 ? 'text-[#dc5a14]' : ''}`}
        >
          {s}
          {i === 0 && <span className="absolute bottom-2 h-1.5 w-[60px] rounded-full bg-[#dc5a14]" />}
        </a>
      ))}
    </nav>
  )
}

function Cards() {
  return (
    <div className="mt-3 grid grid-cols-2 gap-[18px] pr-7 pl-9 text-[42px] font-bold text-[#262626]">
      <section className="relative h-[300px] overflow-hidden rounded-[24px] bg-gradient-to-b from-[#fef4f2] to-[#fffaf8] px-6 pt-[30px]">
        <svg viewBox="0 0 260 180" className="absolute top-0 right-0 h-[180px] w-[260px]">
          <path d="M50 0h210v180H0V65h50z" fill="#fbdcd8" opacity=".25" />
          <path d="M98 50h122v130H34V170V168V168V170h0V168h0V170h0V167h0V168h0V168V168V170H34V170H34V168V170V168h0V170V168H34V170zM98 50V168H34" fill="#fff" opacity=".4" />
          <path d="M122 108h76v72h-76zM70 205" fill="#f9cfca" opacity=".4" />
          <path d="M70 206h40v-2H70z" fill="#f9cfca" />
        </svg>
        <h2 className="relative flex h-12 items-center">
          <svg viewBox="0 0 48 48" className="mr-3 size-12">
            <circle cx="24" cy="24" r="24" fill="#e0685f" />
            <path d="M9 21h7v16H9zM32 25h7v12h-7zM17 12h14v25H17z" fill="#fff" />
            <path d="M22 19l3-2v12" stroke="#e0685f" strokeWidth="2.500" fill="none" />
          </svg>
          <span className="pb-1">人气榜</span>
          <svg viewBox="0 0 14 24" className="ml-3.5 h-6 w-3.5" fill="none" stroke="#aaa" strokeWidth="2">
            <path d="M2 1l10 11L2 23" />
          </svg>
        </h2>
        <p className="relative mt-7 ml-7 text-[35px] font-normal whitespace-pre text-[#444]">{'股市场排名第   名'}</p>
      </section>
      <section className="relative h-[300px] overflow-hidden rounded-[24px] bg-gradient-to-b from-[#fef4f2] to-[#fffaf8] px-6 pt-[30px]">
        <svg viewBox="0 0 240 180" className="absolute top-0 right-0 h-[180px] w-60">
          <path d="M0 0h240v180H10z" fill="#fbdcd8" opacity=".3" />
          <path d="M44 22h48l8 40 30-40h110v158H52z" fill="#fff" opacity=".35" />
          <path d="M66 42h32l4 54 26-54h38L98 180H74z" fill="#f9cfca" opacity=".3" />
          <path d="M228 58c-12-18-58-24-74 8-14 30 36 40 28 62-6 12-26 4-34-4l-22 46h62c40-20 40-50 14-72-14-16 8-22 16-8z" fill="#f9cfca" opacity=".3" />
        </svg>
        <h2 className="relative flex h-12 items-center">
          <svg viewBox="0 0 48 48" className="mr-3 size-12">
            <circle cx="24" cy="24" r="24" fill="#e0685f" />
            <text
              x="8"
              y="34"
              fontSize="26"
              fontWeight="700"
              fontStyle="italic"
              fill="#fff"
              className="font-['Liberation_Sans',sans-serif]"
            >
              VS
            </text>
          </svg>
          <span className="pb-1">多空看盘</span>
        </h2>
        <div className="relative mx-7 mt-6 flex h-12 overflow-hidden rounded-t-full border-4 border-white">
          <span className="flex-1 bg-[#f8dcda]" />
          <span className="ml-1 flex-1 bg-[#d8ecd9]" />
        </div>
      </section>
    </div>
  )
}

const actions = [
  {
    label: '交易',
    icon: (
      <>
        <path d="M16 8A28 28 0 0 1 56 45M48 54A28 28 0 0 1 8 20M1 22l7-5v7M56 38v8l6-5" />
        <path d="M23 17l9 13 9-13M21 31h22M21 39h22M32 30v17" />
      </>
    ),
  },
  {
    label: '发帖',
    icon: (
      <>
        <path d="M42 4H12c-4 0-7 3-7 7v40c0 4 3 7 7 7h40c4 0 7-3 7-7V20" />
        <path d="M56 4l4 4-3 4-5-5zM50 10l5 5-26 26-7 2 2-6z" fill="#666" strokeWidth="1" />
      </>
    ),
  },
  {
    label: '功能',
    icon: (
      <>
        <rect x="7" y="6" width="22" height="23" rx="3" />
        <rect x="7" y="35" width="22" height="22" rx="3" />
        <rect x="35" y="35" width="22" height="22" rx="3" />
        <path d="M46 5l12 13-12 13-12-13z" />
      </>
    ),
  },
  {
    label: '设自选',
    icon: (
      <>
        <circle cx="32" cy="32" r="27" />
        <path d="M18 32h5M30 32h5M42 32h5" strokeWidth="5" />
      </>
    ),
  },
]

function BottomBar() {
  return (
    <footer className="flex h-[176px] shrink-0 border-t border-[#d4d4d4] bg-[#f7f8fa] text-[36px] text-[#666]">
      <a href="#index" className="flex w-[274px] flex-col items-center pt-2 text-[#d92b2b]">
        <svg viewBox="0 0 22 8" className="h-2 w-[22px]" fill="#777">
          <path d="M11 0l11 8H0z" />
        </svg>
        <span className="mt-1 text-[39px] leading-[52px]">3884.69</span>
        <span className="mr-2.5 flex w-[222px] justify-between self-end leading-[48px]">
          <span className="text-[#666]">上证</span>
          0.24%
        </span>
      </a>
      {actions.map((a) => (
        <button key={a.label} type="button" className="flex flex-1 flex-col items-center pt-[7px] leading-[50px]">
          <svg viewBox="0 0 64 64" className="mb-1.5 size-16" fill="none" stroke="#666" strokeWidth="3">
            {a.icon}
          </svg>
          {a.label}
        </button>
      ))}
    </footer>
  )
}

export default function App() {
  return (
    <div className="flex h-screen flex-col bg-white font-['Noto_Sans_CJK_SC',sans-serif] leading-none">
      <main className="min-h-0 flex-1 overflow-hidden">
        <StatusBar />
        <Header />
        <div className="flex h-[120px] items-center justify-between bg-[#fcede4] pr-[45px] pb-1 pl-9 text-[42px] whitespace-nowrap text-[#dc5a14]">
          <a href="#margin">慢牛行情，杠杆加持！开启融资交易&gt;&gt;</a>
          <button type="button" aria-label="关闭">
            <Cross className="size-8" />
          </button>
        </div>
        <QuotePanel />
        <PeriodTabs />
        <MaLegend />
        <PriceSection />
        <VolumeHeader />
        <section className="mx-3">
          <VolumeChart />
          <DateAxis />
        </section>
        <Promo />
        <SectionTabs />
        <Cards />
      </main>
      <BottomBar />
    </div>
  )
}
